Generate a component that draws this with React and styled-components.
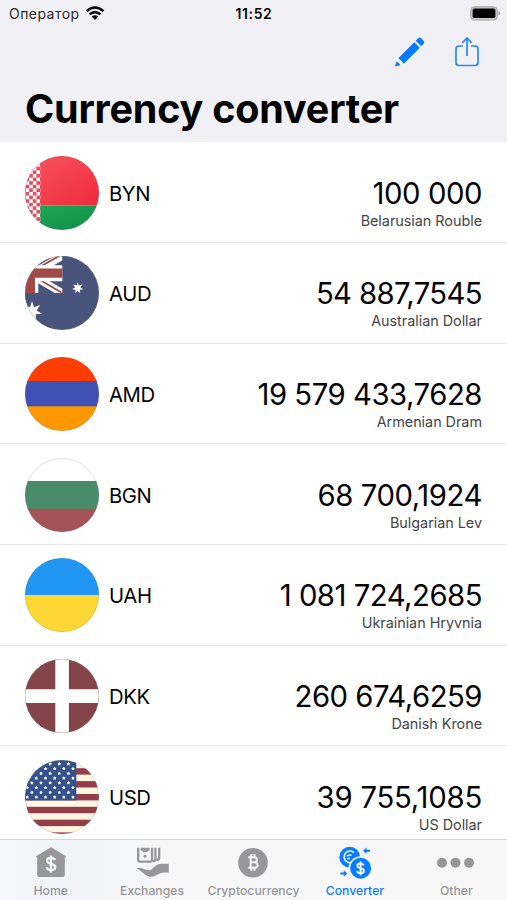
import styled, { createGlobalStyle } from 'styled-components'

const GlobalStyle = createGlobalStyle`
	body {
		margin: 0;
		background: #fff;
		font-family: Inter, "Liberation Sans", sans-serif;
		color: #050505;
	}
`

const starPoints = (cx, cy, outer, inner, count, turn = 0) => {
	const points = []
	for (let i = 0; i < count * 2; i++) {
		const r = i % 2 ? inner : outer
		const a = turn - Math.PI / 2 + (i * Math.PI) / count
		points.push(`${(cx + r * Math.cos(a)).toFixed(2)},${(cy + r * Math.sin(a)).toFixed(2)}`)
	}
	return points.join(' ')
}

const usStars = []
for (let row = 0; row < 8; row++) {
	for (let col = 0; col < 6; col++) {
		usStars.push([2.2 + col * 9.15 + (row % 2 ? 0 : -4.5), 4 + row * 4.75])
	}
}

const Belarus = () => (
	<>
		<defs>
			<linearGradient id="by-red" x1="0" y1="0" x2="1" y2="1">
				<stop offset="0" stopColor="#fb5660" />
				<stop offset="1" stopColor="#ee2a3c" />
			</linearGradient>
			<linearGradient id="by-green" x1="0" y1="0" x2="1" y2="1">
				<stop offset="0" stopColor="#1cae58" />
				<stop offset="1" stopColor="#118a45" />
			</linearGradient>
			<pattern id="by-check" x="0.6" width="7.2" height="7.2" patternUnits="userSpaceOnUse">
				<rect width="7.2" height="7.2" fill="#fff" />
				<rect width="3.6" height="3.6" fill="#ea4b5c" />
				<rect x="3.6" y="3.6" width="3.6" height="3.6" fill="#ea4b5c" />
			</pattern>
		</defs>
		<rect width="74" height="49.3" fill="url(#by-red)" />
		<rect y="49.3" width="74" height="25" fill="url(#by-green)" />
		<rect width="15.3" height="74" fill="url(#by-check)" />
	</>
)

const Australia = () => (
	<>
		<rect width="74" height="74" fill="#48547b" />
		<path d="M-26 0L37.3 37M-26 37L37.3 0" stroke="#fff" strokeWidth="7.5" />
		<rect y="37" width="37.3" height="10" fill="#48547b" />
		<rect x="37.3" width="12" height="44" fill="#48547b" />
		<path d="M15 24L36.5 36.5M14 11.5L34 0" stroke="#a04a48" strokeWidth="1.8" />
		<path d="M0 9.3H37.3V25.3H13.3V37H0Z" fill="#fff" />
		<path d="M0 0H10V12.5H37.3V21.8H10V37H0Z" fill="#a04a48" />
		<polygon points={starPoints(52.7, 32, 5.8, 2.7, 7)} fill="#fff" />
		<polygon points={starPoints(7, 55.5, 10.5, 4.6, 7)} fill="#fff" />
	</>
)

const Armenia = () => (
	<>
		<rect width="74" height="25" fill="#ff3d00" />
		<rect y="24" width="74" height="26" fill="#3f51b5" />
		<rect y="49.3" width="74" height="25" fill="#ff9800" />
	</>
)

const Bulgaria = () => (
	<>
		<rect width="74" height="24" fill="#fff" />
		<rect y="23" width="74" height="28" fill="#4a8c69" />
		<rect y="50.8" width="74" height="24" fill="#a55259" />
	</>
)

const Ukraine = () => (
	<>
		<rect width="74" height="37" fill="#2196f3" />
		<rect y="37" width="74" height="37" fill="#fdd835" />
	</>
)

const Denmark = () => (
	<>
		<rect width="74" height="74" fill="#84454a" />
		<path d="M37.1 0V74M0 37.1H74" stroke="#fff" strokeWidth="13.6" />
	</>
)

const Usa = () => (
	<>
		<rect width="74" height="74" fill="#fdf6e3" />
		{[8.2, 21.1, 34, 46.8, 59.7, 72.4].map((y) => (
			<rect key={y} y={y} width="74" height="6.4" fill="#953e4a" />
		))}
		<rect width="51.3" height="40.4" fill="#35528b" />
		{usStars.filter(([x]) => x < 50).map(([x, y]) => (
			<polygon key={`${x}-${y}`} points={starPoints(x, y, 1.9, 1.1, 5)} fill="#fff" />
		))}
	</>
)

const rows = [
	{ code: 'BYN', name: 'Belarusian Rouble', amount: '100 000', flag: Belarus, tracking: -0.45 },
	{ code: 'AUD', name: 'Australian Dollar', amount: '54 887,7545', flag: Australia, tracking: -0.63 },
	{ code: 'AMD', name: 'Armenian Dram', amount: '19 579 433,7628', flag: Armenia, tracking: -0.47 },
	{ code: 'BGN', name: 'Bulgarian Lev', amount: '68 700,1924', flag: Bulgaria, tracking: -0.42 },
	{ code: 'UAH', name: 'Ukrainian Hryvnia', amount: '1 081 724,2685', flag: Ukraine, tracking: -0.5 },
	{ code: 'DKK', name: 'Danish Krone', amount: '260 674,6259', flag: Denmark, tracking: -0.5 },
	{ code: 'USD', name: 'US Dollar', amount: '39 755,1085', flag: Usa, tracking: -0.22 },
]

const HomeIcon = () => (
	<TabIcon viewBox="0 0 40 34">
		<path d="M20 1.3L35 10.2L33.8 12V29Q33.8 31 31.8 31H8.2Q6.2 31 6.2 29V12L5 10.2Z" fill="currentColor" />
		<path d="M24 14.2C23.4 12.4 22 11.8 20 11.8C17.7 11.8 16 12.9 16 14.8C16 19 24.3 16.6 24.3 21C24.3 23 22.5 24.1 20 24.1C17.6 24.1 16 23.1 15.6 21.3M20 9.4V26.4" fill="none" stroke="#f5f6f9" strokeWidth="2.3" />
	</TabIcon>
)

const ExchangesIcon = () => (
	<TabIcon viewBox="0 0 40 34">
		<path d="M6.2 1.8V14Q6.2 15.6 7.8 15.6H18.4Q20 15.6 20 14V1.8M23.4 1.8V12.8Q23.4 15.2 21 15.4M27.2 1.8V11.4Q27.2 13.8 24.5 14" fill="none" stroke="currentColor" strokeWidth="2.3" />
		<path d="M8.6 1.8H17.6V4.6Q15.6 4.4 15 6.2H11.2Q10.6 4.4 8.6 4.6Z" fill="currentColor" />
		<circle cx="13" cy="10.2" r="1.5" fill="currentColor" />
		<path d="M4.8 22.4C9 20.4 12 24.2 16.5 24.2C18.6 24.2 20 23.4 20.4 22.4C23 20.2 25.5 17.8 29 17.8H36.8V26.4H32.5C27.5 26.4 24.5 30 19 30.8C13.5 30.4 9.5 24.8 4.8 22.4Z" fill="currentColor" />
	</TabIcon>
)

const CryptoIcon = () => (
	<TabIcon viewBox="0 0 40 34">
		<circle cx="20" cy="16.8" r="14.8" fill="currentColor" />
		<path d="M15.2 11.3H21Q23.9 11.3 23.9 13.8Q23.9 16.3 21 16.3H17.6M17.6 16.3H21.5Q24.6 16.3 24.6 19Q24.6 21.8 21.5 21.8H15.2M17.7 11V22M18.3 8.3V11.5M21.5 8.3V11.5M18.3 21.5V24.8M21.5 21.5V24.8" fill="none" stroke="#f7f7f7" strokeWidth="2" />
	</TabIcon>
)

const ConverterIcon = () => (
	<TabIcon viewBox="0 0 40 34">
		<circle cx="14.7" cy="11.2" r="10.4" fill="currentColor" />
		<path d="M19 6.6A5.8 5.8 0 1 0 16.5 16.4M12 10.3Q13.5 8.6 16.5 9.2M12.2 12.6H15" fill="none" stroke="#f7f7f7" strokeWidth="1.5" />
		<circle cx="25.6" cy="22.2" r="12" fill="#f7f7f7" />
		<circle cx="25.6" cy="22.2" r="10.5" fill="currentColor" />
		<path d="M28.8 19.4C28.3 18 27.1 17.5 25.6 17.5C23.6 17.5 22.4 18.4 22.4 19.7C22.4 23.1 29 21.4 29 24.8C29 26.4 27.6 27.2 25.6 27.2C23.7 27.2 22.5 26.4 22.1 25M25.6 15.4V29.2" fill="none" stroke="#f7f7f7" strokeWidth="1.9" />
		<path d="M28 4.7L31.5 1.4V3.7H35V5.8H31.5V8ZM12.3 27.5L8.8 24.2V26.5H5.3V28.6H8.8V30.8Z" fill="currentColor" />
	</TabIcon>
)

const OtherIcon = () => (
	<TabIcon viewBox="0 0 40 34">
		<circle cx="6" cy="16.8" r="5" fill="currentColor" />
		<circle cx="19.5" cy="16.8" r="5" fill="currentColor" />
		<circle cx="33" cy="16.8" r="5" fill="currentColor" />
	</TabIcon>
)

const tabs = [
	{ label: 'Home', icon: HomeIcon },
	{ label: 'Exchanges', icon: ExchangesIcon },
	{ label: 'Cryptocurrency', icon: CryptoIcon },
	{ label: 'Converter', icon: ConverterIcon, active: true },
	{ label: 'Other', icon: OtherIcon },
]

const App = () => {
	return (
		<Screen>
			<GlobalStyle />
			<Header>
				<StatusBar>
					<Carrier>
						Оператор
						<svg width="20" height="15" viewBox="0 0 20 15">
							<path d="M1.5 5.2Q10 -2.2 18.5 5.2M4.6 8.4Q10 3.8 15.4 8.4" fill="none" stroke="#050505" strokeWidth="2.5" />
							<path d="M6.7 10.6Q10 8.1 13.3 10.6L10 14Z" fill="#050505" />
						</svg>
					</Carrier>
					<Clock>11:52</Clock>
					<Battery width="31" height="15" viewBox="0 0 31 15">
						<rect x="0.8" y="0.8" width="26.4" height="13" rx="3.6" fill="#d0d0d2" stroke="#a9a9ab" strokeWidth="1.2" />
						<rect x="2.6" y="2.6" width="22.8" height="9.4" rx="1.6" fill="#000" />
						<path d="M28.4 5Q30.4 5.5 30.4 7.3T28.4 9.6Z" fill="#a9a9ab" />
					</Battery>
				</StatusBar>
				<Toolbar>
					<svg width="32" height="32" viewBox="0 0 32 32">
						<path d="M4.3 22.2L20.3 6.2L25.8 11.7L9.8 27.7Q7.5 24.5 4.3 22.2Z" fill="#007aff" />
						<path d="M21.7 4.8L24 2.5Q25.7 1 27.4 2.6L29.4 4.6Q31 6.3 29.5 8L27.2 10.3Z" fill="#007aff" />
						<path d="M2.6 25.5Q5.1 26.8 6.3 29.2L1 30.6Z" fill="#007aff" />
					</svg>
					<svg width="26" height="32" viewBox="0 0 26 32">
						<path d="M9 10H5Q2 10 2 13V26.5Q2 29.5 5 29.5H21Q24 29.5 24 26.5V13Q24 10 21 10H17M13 20V2.3M8.3 6.8L13 2L17.7 6.8" fill="none" stroke="#2388fb" strokeWidth="1.7" />
					</svg>
				</Toolbar>
				<Title>Currency converter</Title>
			</Header>
			<List>
				{rows.map(({ code, name, amount, flag: FlagArt, tracking }) => (
					<Row key={code}>
						<Flag viewBox="0 0 74 74">
							<clipPath id={`clip-${code}`}>
								<circle cx="37" cy="37" r="37" />
							</clipPath>
							<g clipPath={`url(#clip-${code})`}>
								<FlagArt />
							</g>
							<circle cx="37" cy="37" r="36.6" fill="none" stroke="#777" strokeOpacity="0.28" strokeWidth="0.8" />
						</Flag>
						<Code>{code}</Code>
						<Value>
							<Amount $tracking={tracking}>{amount}</Amount>
							<Name>{name}</Name>
						</Value>
					</Row>
				))}
			</List>
			<TabBar>
				{tabs.map(({ label, icon: Icon, active }) => (
					<Tab key={label} $active={active}>
						<Icon />
						<TabLabel>{label}</TabLabel>
					</Tab>
				))}
			</TabBar>
		</Screen>
	)
}

const Screen = styled.div`
	width: 507px;
	height: 900px;
	display: flex;
	flex-direction: column;
	overflow: hidden;
`

const Header = styled.header`
	flex: none;
	height: 142.4px;
	box-sizing: border-box;
	background: #f1f0f5;
`

const StatusBar = styled.div`
	display: grid;
	grid-template-columns: 1fr auto 1fr;
	align-items: center;
	height: 27px;
	padding: 0 6px 0 9px;
`

const Carrier = styled.div`
	display: flex;
	align-items: center;
	gap: 5px;
	font-size: 14px;
	letter-spacing: 0.45px;
	color: #2a2a2c;
`

const Clock = styled.div`
	margin-right: 2px;
	font-size: 14px;
	font-weight: 600;
	letter-spacing: 0.6px;
`

const Battery = styled.svg`
	justify-self: end;
`

const Toolbar = styled.div`
	display: flex;
	justify-content: flex-end;
	align-items: center;
	gap: 28px;
	height: 50px;
	padding-right: 27px;
`

const Title = styled.h1`
	margin: 8px 0 0 25px;
	font-size: 39.5px;
	line-height: 48px;
	font-weight: 700;
	letter-spacing: -0.2px;
	white-space: nowrap;
	color: #000;
`

const List = styled.main`
	flex: 1;
	min-height: 0;
	overflow: hidden;
`

const Row = styled.div`
	display: flex;
	align-items: center;
	height: 100.65px;
	box-sizing: border-box;
	padding: 1px 25px 0;
	border-bottom: 1px solid #e6e6e8;
`

const Flag = styled.svg`
	flex: none;
	width: 74px;
	height: 74px;
`

const Code = styled.div`
	margin-left: 10px;
	padding-top: 1px;
	font-size: 20.3px;
	letter-spacing: -0.4px;
`

const Value = styled.div`
	margin-left: auto;
	padding-top: 20px;
	text-align: right;
	white-space: nowrap;
`

const Amount = styled.div`
	font-size: 29.3px;
	line-height: 36px;
	letter-spacing: ${({ $tracking }) => $tracking}px;
`

const Name = styled.div`
	font-size: 14.4px;
	line-height: 18px;
	letter-spacing: -0.03px;
	color: #454547;
`

const TabBar = styled.nav`
	flex: none;
	display: grid;
	grid-template-columns: repeat(5, 1fr);
	height: 61px;
	box-sizing: border-box;
	border-top: 1px solid #d5d5d7;
	background: linear-gradient(90deg, #f4f6fa, #f1f3fa 14%, #f7f7f7 32%);
`

const Tab = styled.div`
	display: flex;
	flex-direction: column;
	align-items: center;
	padding-top: 6px;
	color: ${({ $active }) => ($active ? '#0a7cff' : '#97979a')};
`

const TabIcon = styled.svg`
	width: 40px;
	height: 34px;
`

const TabLabel = styled.span`
	margin-top: 3px;
	font-size: 12.2px;
	line-height: 16px;
	font-weight: 500;
	letter-spacing: 0.02px;
`

export default App
